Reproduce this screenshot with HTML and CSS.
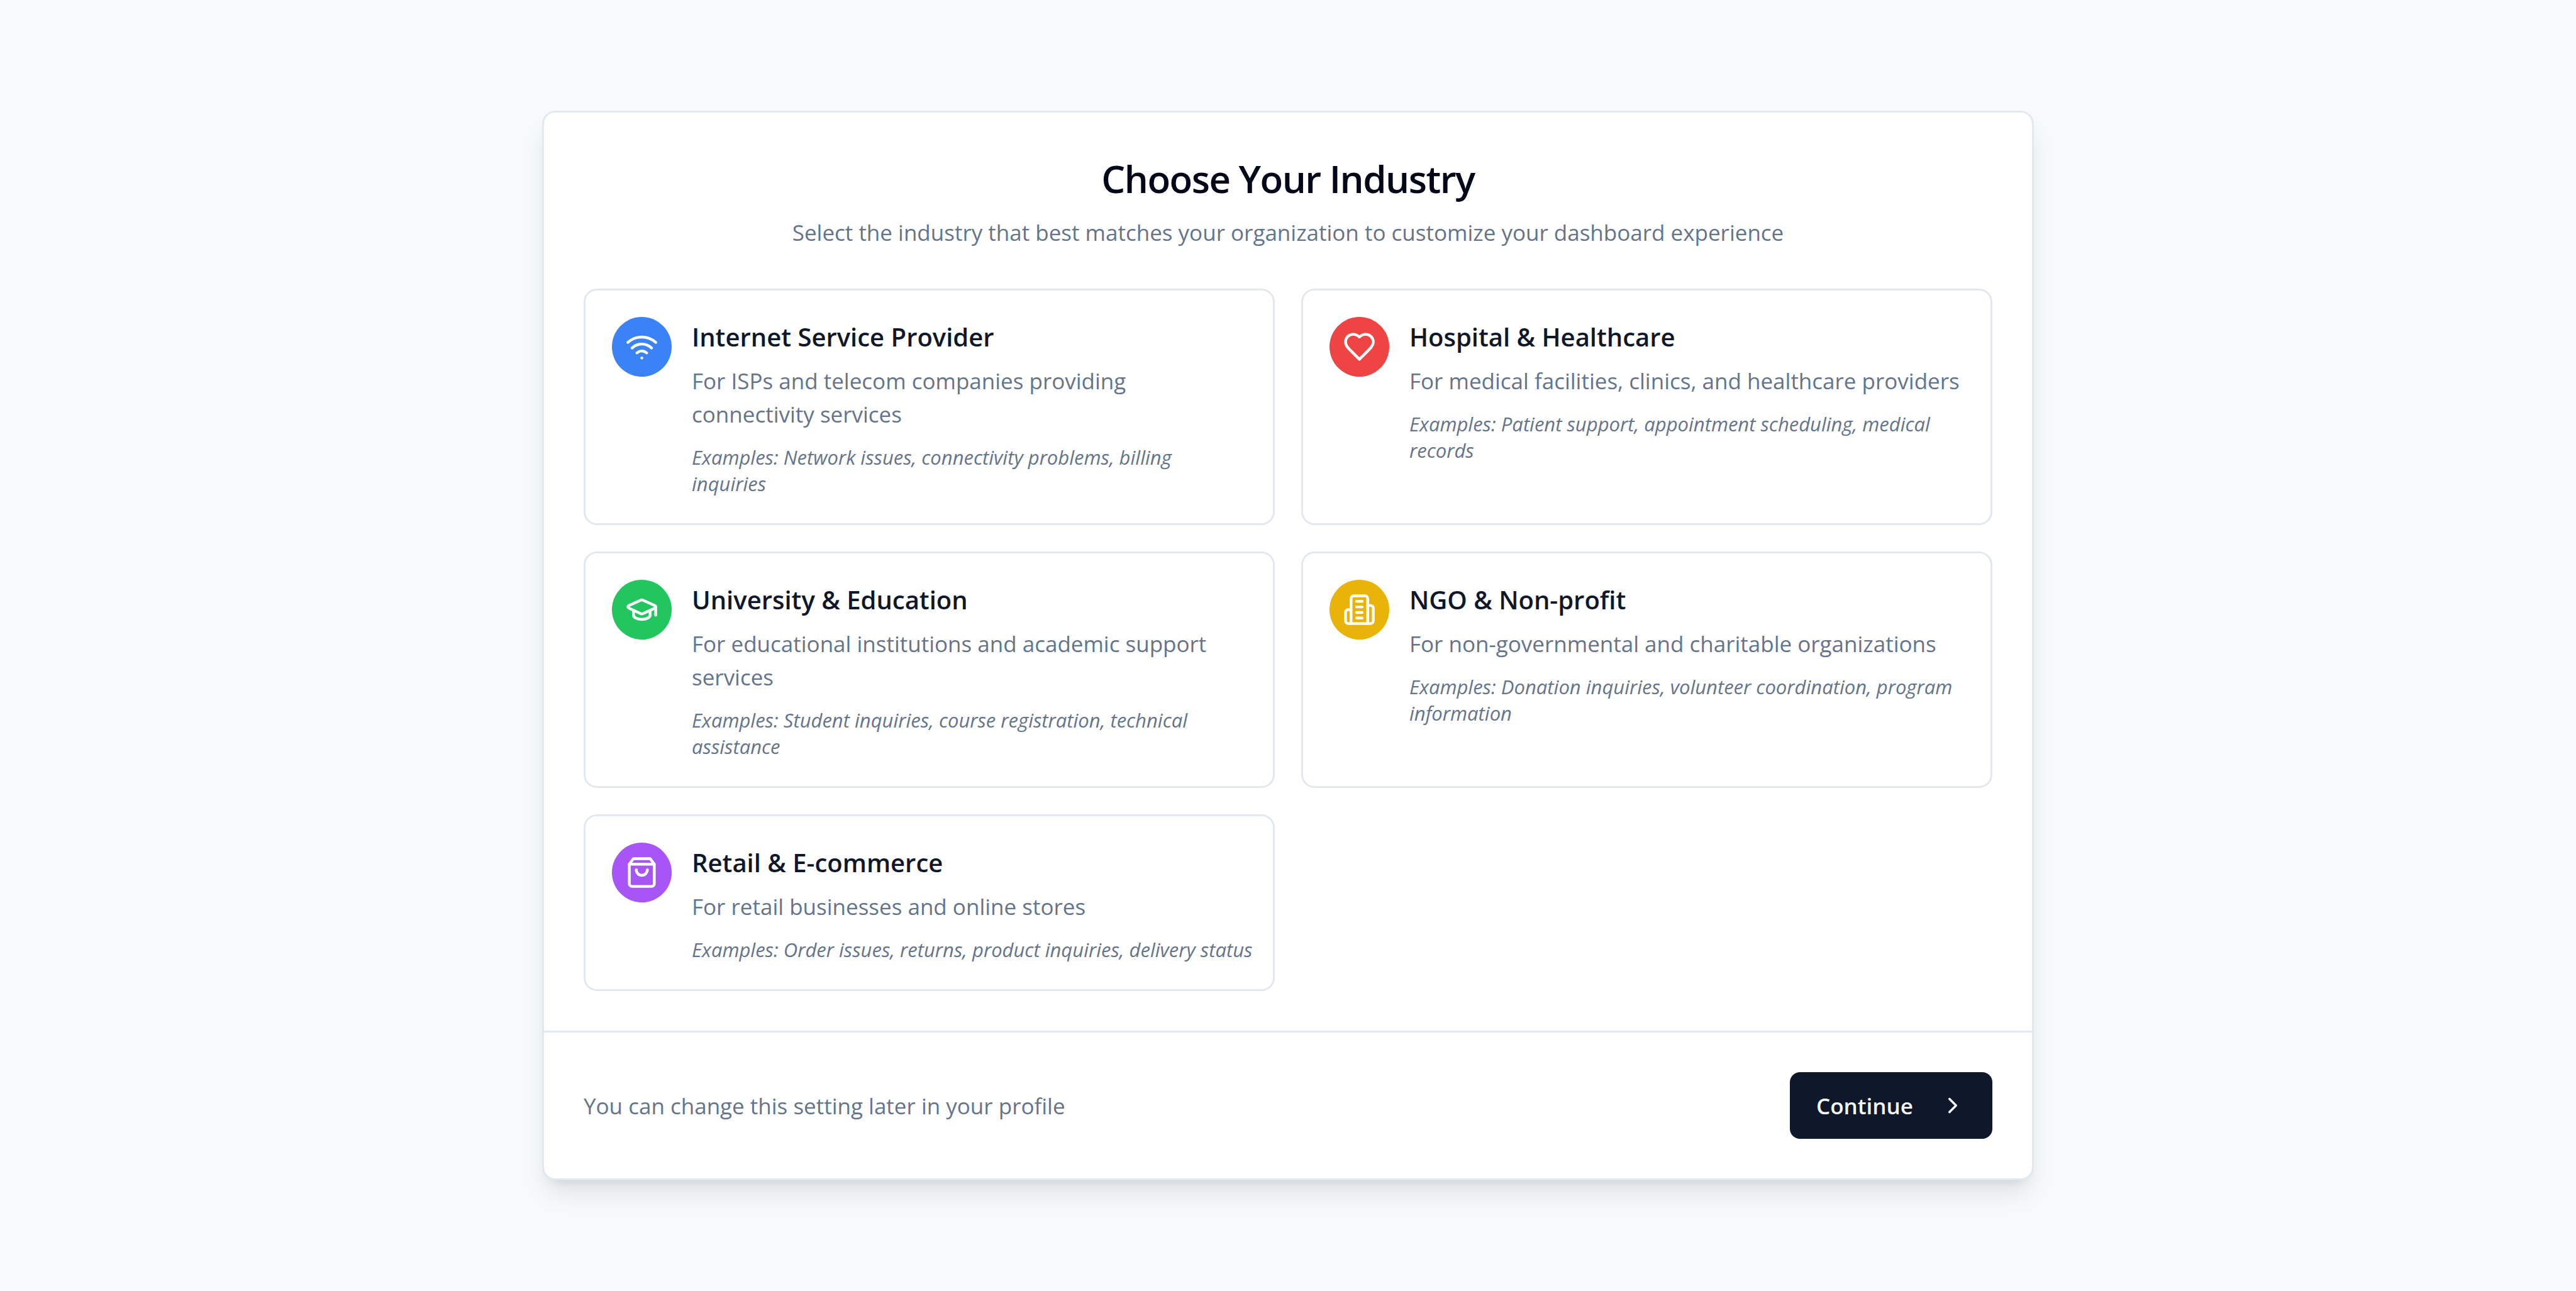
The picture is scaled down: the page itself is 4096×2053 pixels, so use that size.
FILE: index.html
```html
<!DOCTYPE html>
<html lang="en">
<head>
<meta charset="utf-8">
<meta name="viewport" content="width=device-width, initial-scale=1">
<title>Choose Your Industry</title>
<link rel="stylesheet" href="styles.css">
</head>
<body>
<main class="page">
  <form class="card">
    <header class="card-header">
      <h1 class="card-title">Choose Your Industry</h1>
      <p class="card-subtitle">Select the industry that best matches your organization to customize your dashboard experience</p>
    </header>

    <div class="options" role="radiogroup" aria-label="Industry">
      <label class="option">
        <input class="option-input" type="radio" name="industry" value="isp">
        <span class="option-icon blue">
          <svg class="icon" viewBox="0 0 24 24" aria-hidden="true"><path d="M12 20h.01"/><path d="M2 8.82a15 15 0 0 1 20 0"/><path d="M5 12.859a10 10 0 0 1 14 0"/><path d="M8.5 16.429a5 5 0 0 1 7 0"/></svg>
        </span>
        <span class="option-body">
          <span class="option-title">Internet Service Provider</span>
          <span class="option-text">For ISPs and telecom companies providing connectivity services</span>
          <span class="option-examples">Examples: Network issues, connectivity problems, billing inquiries</span>
        </span>
      </label>

      <label class="option">
        <input class="option-input" type="radio" name="industry" value="healthcare">
        <span class="option-icon red">
          <svg class="icon" viewBox="0 0 24 24" aria-hidden="true"><path d="M19 14c1.49-1.46 3-3.21 3-5.5A5.5 5.5 0 0 0 16.5 3c-1.76 0-3 .5-4.5 2-1.5-1.5-2.74-2-4.5-2A5.5 5.5 0 0 0 2 8.5c0 2.3 1.5 4.05 3 5.5l7 7Z"/></svg>
        </span>
        <span class="option-body">
          <span class="option-title">Hospital &amp; Healthcare</span>
          <span class="option-text">For medical facilities, clinics, and healthcare providers</span>
          <span class="option-examples">Examples: Patient support, appointment scheduling, medical records</span>
        </span>
      </label>

      <label class="option">
        <input class="option-input" type="radio" name="industry" value="education">
        <span class="option-icon green">
          <svg class="icon" viewBox="0 0 24 24" aria-hidden="true"><path d="M21.42 10.922a1 1 0 0 0-.019-1.838L12.83 5.18a2 2 0 0 0-1.66 0L2.6 9.08a1 1 0 0 0 0 1.832l8.57 3.908a2 2 0 0 0 1.66 0z"/><path d="M22 10v6"/><path d="M6 12.5V16a6 3 0 0 0 12 0v-3.5"/></svg>
        </span>
        <span class="option-body">
          <span class="option-title">University &amp; Education</span>
          <span class="option-text">For educational institutions and academic support services</span>
          <span class="option-examples">Examples: Student inquiries, course registration, technical assistance</span>
        </span>
      </label>

      <label class="option">
        <input class="option-input" type="radio" name="industry" value="ngo">
        <span class="option-icon yellow">
          <svg class="icon" viewBox="0 0 24 24" aria-hidden="true"><path d="M6 22V4a2 2 0 0 1 2-2h8a2 2 0 0 1 2 2v18Z"/><path d="M6 12H4a2 2 0 0 0-2 2v6a2 2 0 0 0 2 2h2"/><path d="M18 9h2a2 2 0 0 1 2 2v9a2 2 0 0 1-2 2h-2"/><path d="M10 6h4"/><path d="M10 10h4"/><path d="M10 14h4"/><path d="M10 18h4"/></svg>
        </span>
        <span class="option-body">
          <span class="option-title">NGO &amp; Non-profit</span>
          <span class="option-text">For non-governmental and charitable organizations</span>
          <span class="option-examples">Examples: Donation inquiries, volunteer coordination, program information</span>
        </span>
      </label>

      <label class="option">
        <input class="option-input" type="radio" name="industry" value="retail">
        <span class="option-icon purple">
          <svg class="icon" viewBox="0 0 24 24" aria-hidden="true"><path d="M6 2 3 6v14a2 2 0 0 0 2 2h14a2 2 0 0 0 2-2V6l-3-4Z"/><path d="M3 6h18"/><path d="M16 10a4 4 0 0 1-8 0"/></svg>
        </span>
        <span class="option-body">
          <span class="option-title">Retail &amp; E-commerce</span>
          <span class="option-text">For retail businesses and online stores</span>
          <span class="option-examples single-line">Examples: Order issues, returns, product inquiries, delivery status</span>
        </span>
      </label>
    </div>

    <footer class="card-footer">
      <p class="card-note">You can change this setting later in your profile</p>
      <button class="continue" type="button">
        Continue
        <svg class="icon-small" viewBox="0 0 24 24" aria-hidden="true"><path d="m9 18 6-6-6-6"/></svg>
      </button>
    </footer>
  </form>
</main>
</body>
</html>
```

FILE: styles.css
```css
*,
*::before,
*::after {
  box-sizing: border-box;
}

body {
  margin: 0;
  background: #f6fafb;
  color: #020817;
  font-family: "Segoe UI", "Open Sans", "Noto Sans", sans-serif;
  font-size: 35px;
  line-height: 53px;
}

h1,
p {
  margin: 0;
}

.page {
  display: flex;
  align-items: center;
  justify-content: center;
  min-height: 100vh;
  padding: 42px;
}

.card {
  width: 100%;
  max-width: 2372px;
  background: #fff;
  border: 3px solid #e2e8f0;
  border-radius: 21px;
  box-shadow: 0 26px 40px -8px rgba(0, 0, 0, 0.1), 0 11px 16px -11px rgba(0, 0, 0, 0.1);
}

.card-header {
  display: flex;
  flex-direction: column;
  gap: 16px;
  padding: 63px;
  text-align: center;
}

.card-title {
  font-size: 60px;
  font-weight: 600;
  line-height: 85px;
  letter-spacing: -0.025em;
}

.card-subtitle,
.card-note {
  color: #64748b;
}

.options {
  display: grid;
  grid-template-columns: repeat(2, minmax(0, 1fr));
  gap: 42px;
  padding: 0 63px 63px;
}

.option {
  position: relative;
  display: flex;
  align-items: flex-start;
  gap: 32px;
  padding: 42px;
  border: 3px solid #e2e8f0;
  border-radius: 21px;
  cursor: pointer;
}

.option:has(:checked) {
  border-color: #0f172a;
}

.option-input {
  position: absolute;
  inset: 0;
  margin: 0;
  opacity: 0;
}

.option-icon {
  display: flex;
  flex: none;
  align-items: center;
  justify-content: center;
  width: 95px;
  height: 95px;
  border-radius: 50%;
  color: #fff;
}

.blue { background: #3b82f6; }
.red { background: #ef4444; }
.green { background: #22c55e; }
.yellow { background: #eab308; }
.purple { background: #a855f7; }

.icon,
.icon-small {
  flex: none;
  width: 53px;
  height: 53px;
  fill: none;
  stroke: currentColor;
  stroke-width: 2;
  stroke-linecap: round;
  stroke-linejoin: round;
}

.icon-small {
  width: 42px;
  height: 42px;
}

.option-body {
  display: flex;
  flex: 1;
  flex-direction: column;
  min-width: 0;
  color: #64748b;
}

.option-title {
  margin-bottom: 11px;
  color: #0f172a;
  font-size: 40px;
  font-weight: 600;
  line-height: 64px;
}

.option-examples {
  margin-top: 21px;
  font-size: 31px;
  font-style: italic;
  line-height: 42px;
}

.single-line {
  white-space: nowrap;
}

.card-footer {
  display: flex;
  align-items: center;
  justify-content: space-between;
  padding: 63px;
  border-top: 3px solid #e2e8f0;
}

.continue {
  display: flex;
  align-items: center;
  gap: 42px;
  height: 106px;
  padding: 0 42px;
  border: 0;
  border-radius: 16px;
  background: #0f172a;
  color: #f8fafc;
  font: inherit;
  font-weight: 600;
  cursor: pointer;
}
```
